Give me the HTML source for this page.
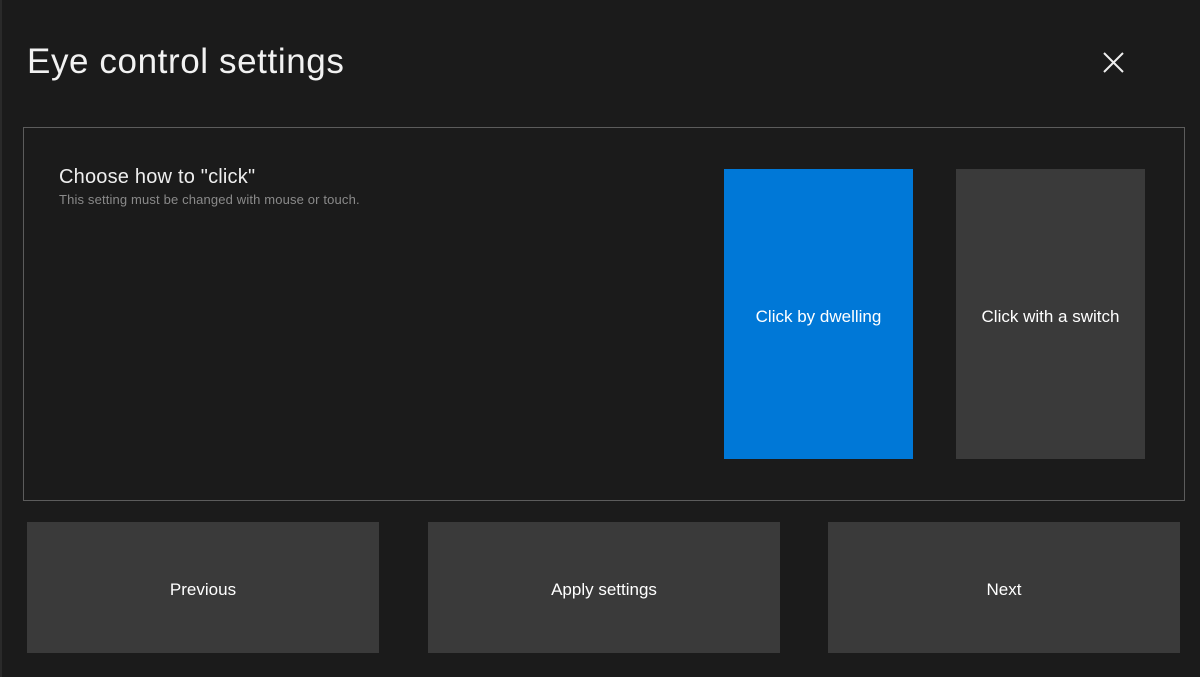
<!DOCTYPE html>
<html><head><style>
body{margin:0;width:1200px;height:677px;background:#1b1b1b;font-family:"Liberation Sans",sans-serif;color:#fff;position:relative;overflow:hidden}
div{position:absolute;box-sizing:border-box}
.t{display:flex;align-items:center;justify-content:center;font-size:17px;background:#3a3a3a;padding-top:5px}
</style></head><body>
<div style="left:0;top:0;width:2px;height:677px;background:#2a2a2a"></div>
<div style="left:27px;top:42px;font-size:35px;color:#f2f2f2;letter-spacing:0.6px">Eye control settings</div>
<svg style="position:absolute;left:1103px;top:52px" width="21" height="21"><path d="M1 1L20 20M20 1L1 20" stroke="#eee" stroke-width="2"/></svg>
<div style="left:23px;top:127px;width:1162px;height:374px;border:1.5px solid #5c5c5c"></div>
<div style="left:59px;top:166px;font-size:20px;color:#eee;letter-spacing:0.2px">Choose how to "click"</div>
<div style="left:59px;top:192px;font-size:13px;color:#8a8a8a;letter-spacing:0.15px">This setting must be changed with mouse or touch.</div>
<div class="t" style="left:724px;top:169px;width:189px;height:290px;background:#0078d7">Click by dwelling</div>
<div class="t" style="left:956px;top:169px;width:189px;height:290px">Click with a switch</div>
<div class="t" style="left:27px;top:522px;width:352px;height:131px">Previous</div>
<div class="t" style="left:428px;top:522px;width:352px;height:131px">Apply settings</div>
<div class="t" style="left:828px;top:522px;width:352px;height:131px">Next</div>
</body></html>
